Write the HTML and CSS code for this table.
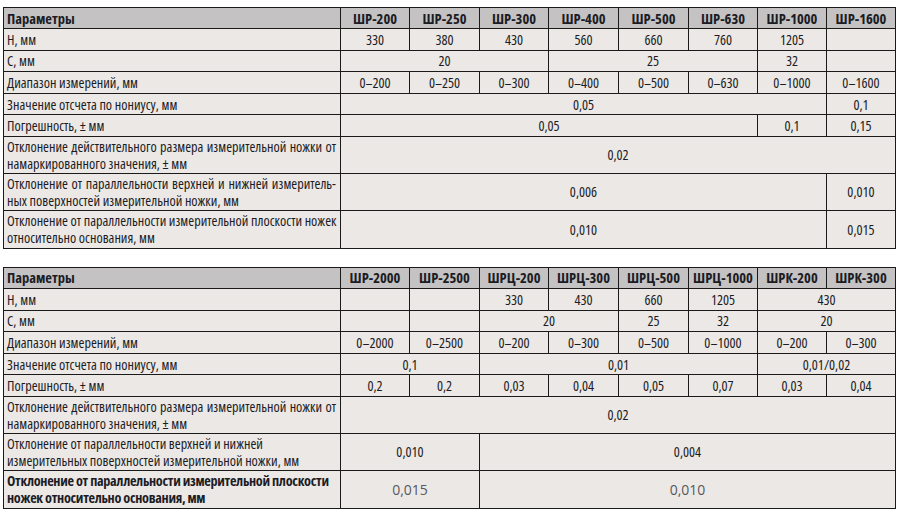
FILE: index.html
```html
<!DOCTYPE html>
<html lang="ru">
<head>
<meta charset="utf-8">
<title>Параметры</title>
<link rel="stylesheet" href="styles.css">
</head>
<body>
<div class="page">
<table class="spec">
  <colgroup>
    <col class="c-label"><col class="c69"><col class="c70"><col class="c69"><col class="c70"><col class="c70"><col class="c69"><col class="c69"><col class="c69">
  </colgroup>
  <thead>
    <tr class="head">
      <th class="label">Параметры</th>
      <th>ШР-200</th><th>ШР-250</th><th>ШР-300</th><th>ШР-400</th><th>ШР-500</th><th>ШР-630</th><th>ШР-1000</th><th>ШР-1600</th>
    </tr>
  </thead>
  <tbody>
    <tr class="one">
      <td class="label">Н, мм</td>
      <td>330</td><td>380</td><td>430</td><td>560</td><td>660</td><td>760</td><td>1205</td><td></td>
    </tr>
    <tr class="one">
      <td class="label">С, мм</td>
      <td colspan="3">20</td><td colspan="3">25</td><td>32</td><td></td>
    </tr>
    <tr class="one">
      <td class="label">Диапазон измерений, мм</td>
      <td>0–200</td><td>0–250</td><td>0–300</td><td>0–400</td><td>0–500</td><td>0–630</td><td>0–1000</td><td>0–1600</td>
    </tr>
    <tr class="one">
      <td class="label">Значение отсчета по нониусу, мм</td>
      <td colspan="7">0,05</td><td>0,1</td>
    </tr>
    <tr class="one">
      <td class="label">Погрешность, ± мм</td>
      <td colspan="6">0,05</td><td>0,1</td><td>0,15</td>
    </tr>
    <tr class="two">
      <td class="label"><span class="ln jl">Отклонение действительного размера измерительной ножки от</span><span class="ln">намаркированного значения, ± мм</span></td>
      <td colspan="8">0,02</td>
    </tr>
    <tr class="two">
      <td class="label"><span class="ln jl">Отклонение от параллельности верхней и нижней измеритель-</span><span class="ln">ных поверхностей измерительной ножки, мм</span></td>
      <td colspan="7">0,006</td><td>0,010</td>
    </tr>
    <tr class="two last">
      <td class="label"><span class="ln jl">Отклонение от параллельности измерительной плоскости ножек</span><span class="ln">относительно основания, мм</span></td>
      <td colspan="7">0,010</td><td>0,015</td>
    </tr>
  </tbody>
</table>

<table class="spec">
  <colgroup>
    <col class="c-label"><col class="c69"><col class="c70"><col class="c69"><col class="c70"><col class="c70"><col class="c69"><col class="c69"><col class="c69">
  </colgroup>
  <thead>
    <tr class="head">
      <th class="label">Параметры</th>
      <th>ШР-2000</th><th>ШР-2500</th><th>ШРЦ-200</th><th>ШРЦ-300</th><th>ШРЦ-500</th><th>ШРЦ-1000</th><th>ШРК-200</th><th>ШРК-300</th>
    </tr>
  </thead>
  <tbody>
    <tr class="one">
      <td class="label">Н, мм</td>
      <td></td><td></td><td>330</td><td>430</td><td>660</td><td>1205</td><td colspan="2">430</td>
    </tr>
    <tr class="one">
      <td class="label">С, мм</td>
      <td></td><td></td><td colspan="2">20</td><td>25</td><td>32</td><td colspan="2">20</td>
    </tr>
    <tr class="one">
      <td class="label">Диапазон измерений, мм</td>
      <td>0–2000</td><td>0–2500</td><td>0–200</td><td>0–300</td><td>0–500</td><td>0–1000</td><td>0–200</td><td>0–300</td>
    </tr>
    <tr class="one">
      <td class="label">Значение отсчета по нониусу, мм</td>
      <td colspan="2">0,1</td><td colspan="4">0,01</td><td colspan="2">0,01/0,02</td>
    </tr>
    <tr class="one">
      <td class="label">Погрешность, ± мм</td>
      <td>0,2</td><td>0,2</td><td>0,03</td><td>0,04</td><td>0,05</td><td>0,07</td><td>0,03</td><td>0,04</td>
    </tr>
    <tr class="two">
      <td class="label"><span class="ln jl">Отклонение действительного размера измерительной ножки от</span><span class="ln">намаркированного значения, ± мм</span></td>
      <td colspan="8">0,02</td>
    </tr>
    <tr class="two">
      <td class="label"><span class="ln">Отклонение от параллельности верхней и нижней</span><span class="ln">измерительных поверхностей измерительной ножки, мм</span></td>
      <td colspan="2">0,010</td><td colspan="6">0,004</td>
    </tr>
    <tr class="two last">
      <td class="label bold"><span class="ln">Отклонение от параллельности измерительной плоскости</span><span class="ln">ножек относительно основания, мм</span></td>
      <td colspan="2" class="light">0,015</td><td colspan="6" class="light">0,010</td>
    </tr>
  </tbody>
</table>
</div>
</body>
</html>
```

FILE: styles.css
```css
html, body {
  margin: 0;
  padding: 0;
  background: #ffffff;
}

.page {
  padding: 7px 0 0 3px;
  display: flex;
  flex-direction: column;
  gap: 18px;
  font-family: "Open Sans", "Noto Sans", sans-serif;
  font-stretch: condensed;
  color: #1c1c24;
}

.spec {
  width: 892px;
  table-layout: fixed;
  border-collapse: collapse;
  background: #ebe8e6;
  border: 1px solid #1a1a1a;
  font-size: 14.2px;
}

.c-label { width: 337px; }
.c69 { width: 69px; }
.c70 { width: 70px; }

.spec th,
.spec td {
  border: 1px solid #1a1a1a;
  padding: 0 2px;
  text-align: center;
  vertical-align: middle;
  white-space: nowrap;
}

.spec .label {
  text-align: left;
  padding-left: 3px;
  padding-right: 4px;
}

.head th {
  background: #c4c2c2;
  font-weight: bold;
  font-size: 14.5px;
  height: 20px;
}

.one td {
  height: 20.6px;
}

.two td {
  height: 36px;
}

.two.last td {
  height: 37px;
}

.ln {
  display: block;
  line-height: 17px;
}

.jl {
  text-align: justify;
  text-align-last: justify;
}

.bold {
  font-weight: bold;
  letter-spacing: -0.3px;
}

.light {
  font-stretch: normal;
  font-size: 14px;
  color: #58585c;
}
```
